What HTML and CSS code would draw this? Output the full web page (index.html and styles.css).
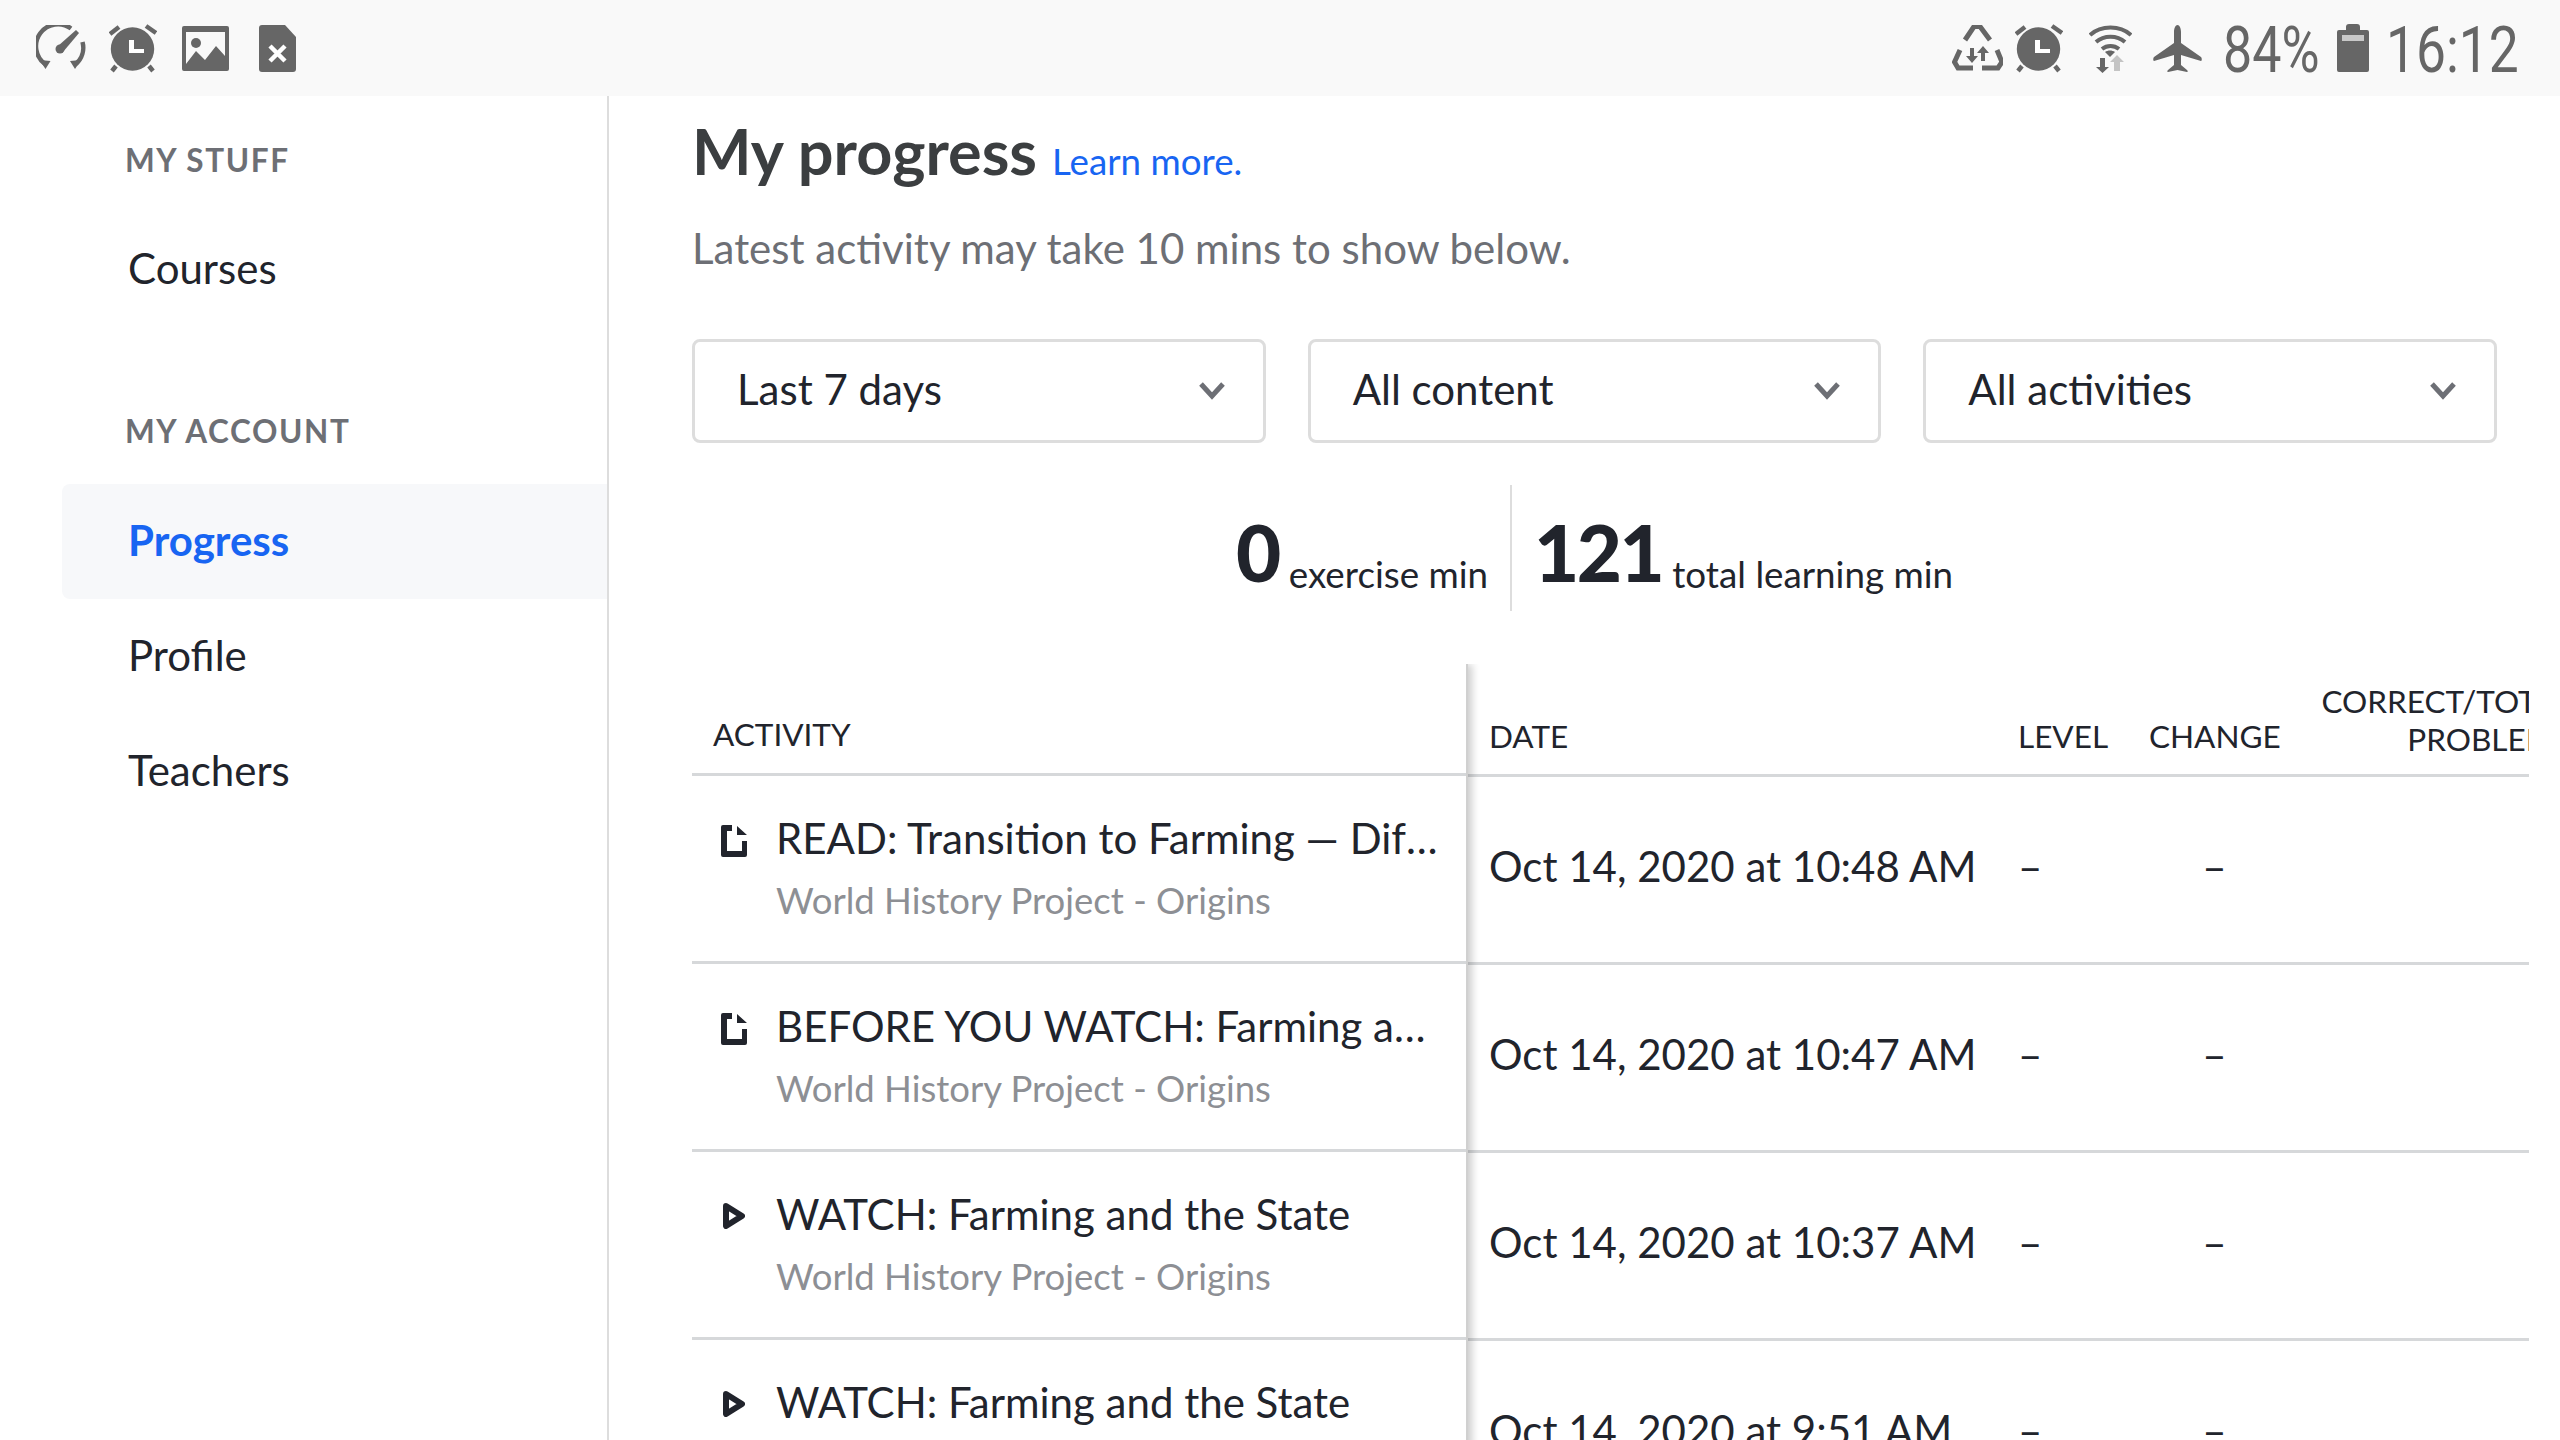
FILE: index.html
```html
<!DOCTYPE html>
<html lang="en">
<head>
<meta charset="utf-8">
<title>My progress</title>
<link rel="stylesheet" href="styles.css">
</head>
<body>
<header class="status">
  <div class="status-left">
    <svg class="i-gauge" width="50" height="46" viewBox="0 0 50 46"><path d="M9 39A22 22 0 0 1 35 3.500" fill="none" stroke="#666" stroke-width="4.500"/><path d="M40 39A22 22 0 0 0 46.500 17" fill="none" stroke="#666" stroke-width="4.500"/><path d="M3.500 35l11 1-5 8zM45 35l-11 1 5 8z" fill="#666"/><circle cx="24" cy="24" r="4.500" fill="#666"/><path d="M22 21L40 5l3 3-16 19z" fill="#666"/></svg>
    <svg class="i-alarm" width="48" height="49" viewBox="0 0 48 49"><use href="#alarm-shape"/></svg>
    <svg class="i-image" width="47" height="45" viewBox="0 0 47 45"><path fill-rule="evenodd" d="M2 0h43a2 2 0 0 1 2 2v41a2 2 0 0 1-2 2H2a2 2 0 0 1-2-2V2a2 2 0 0 1 2-2zM4 6v32l10-13 9 9 11-14 9 10V6z" fill="#666"/><circle cx="14" cy="17" r="5" fill="#666"/></svg>
    <svg class="i-sim" width="37" height="47" viewBox="0 0 37 47"><path d="M3 0h23l11 12v32a3 3 0 0 1-3 3H3a3 3 0 0 1-3-3V3a3 3 0 0 1 3-3z" fill="#666"/><path d="M11 21l15 15M26 21L11 36" stroke="#fff" stroke-width="4.500"/></svg>
  </div>
  <div class="status-right">
    <svg width="51" height="46" viewBox="0 0 51 46"><g fill="none" stroke="#666" stroke-width="5"><path d="M13 15L22 1.500h6L38 15"/><path d="M8 25L2.500 37 6 43h15M45 25l5 12-4 6H30"/></g><path d="M18 23h4v8h4l-6 7-6-7h4zM29 36v-8h-4l6-7 6 7h-4v8z" fill="#666"/></svg>
    <svg class="gap-alarm" width="48" height="49" viewBox="0 0 48 49"><symbol id="alarm-shape" viewBox="0 0 48 49"><path d="M1 10l9-7" fill="none" stroke="#666" stroke-width="4.500"/><path d="M47 9L37 2" fill="none" stroke="#666" stroke-width="4.500"/><path d="M7 42l-4 5M40 42l4 5" fill="none" stroke="#666" stroke-width="4.500"/><circle cx="23.500" cy="25" r="21.700" fill="#666"/><path d="M20 16h5v9h10v4H20z" fill="#fff"/></symbol><use href="#alarm-shape"/></svg>
    <svg class="gap-wifi" width="43" height="49" viewBox="0 0 43 49"><g fill="none" stroke="#666" stroke-width="4"><path d="M1 11C12 1 31 1 42 11"/><path d="M7 18c8-7 21-7 29 0"/><path d="M13 25c5-4 12-4 17 0"/></g><path d="M21 33l-5-5c3-2 7-2 10 0z" fill="#666"/><path d="M11 34h5v9h4l-6.500 6L7 43h4z" fill="#666"/><path d="M25 47V38h-4l7-7 7 7h-4v9z" fill="#c4c4c4"/></svg>
    <svg class="gap-plane" width="49" height="47" viewBox="0 0 49 47"><path d="M24.500 0c2.500 0 3.500 4 3.500 7v11l20 14c1 1 1 4 0 4l-20-6v10l6 5c1 1 1 2 0 2l-9.500-2-9.500 2c-1 0-1-1 0-2l6-5V30L1 36c-1 0-1-3 0-4l20-14V7c0-3 1-7 3.500-7z" fill="#666"/></svg>
    <span class="status-text pct">84%</span>
    <svg class="gap-batt" width="32" height="48" viewBox="0 0 32 48"><path d="M9 3a3 3 0 0 1 3-3h8a3 3 0 0 1 3 3v3h7a2 2 0 0 1 2 2v38a2 2 0 0 1-2 2H2a2 2 0 0 1-2-2V8a2 2 0 0 1 2-2h7z" fill="#666"/><rect x="5" y="11" width="22" height="6" fill="#c8c8c8"/></svg>
    <span class="status-text clock">16:12</span>
  </div>
</header>
<div class="app">
  <nav class="sidebar">
    <h3 class="nav-head first">MY STUFF</h3>
    <a class="nav-item">Courses</a>
    <h3 class="nav-head second">MY ACCOUNT</h3>
    <a class="nav-item active">Progress</a>
    <a class="nav-item">Profile</a>
    <a class="nav-item">Teachers</a>
  </nav>
  <main class="content">
    <div class="title-line"><h1>My progress</h1><a class="learn">Learn more.</a></div>
    <p class="latest">Latest activity may take 10 mins to show below.</p>
    <div class="filters">
      <div class="select"><span>Last 7 days</span><svg width="28" height="20" viewBox="0 0 28 20"><path d="M3 3l11 12L25 3" fill="none" stroke="#6d6f75" stroke-width="5"/></svg></div>
      <div class="select"><span>All content</span><svg width="28" height="20" viewBox="0 0 28 20"><path d="M3 3l11 12L25 3" fill="none" stroke="#6d6f75" stroke-width="5"/></svg></div>
      <div class="select"><span>All activities</span><svg width="28" height="20" viewBox="0 0 28 20"><path d="M3 3l11 12L25 3" fill="none" stroke="#6d6f75" stroke-width="5"/></svg></div>
    </div>
    <div class="stats">
      <div class="stat left"><b>0</b><span>exercise min</span></div>
      <div class="stat right"><b>121</b><span>total learning min</span></div>
    </div>
    <div class="table">
      <div class="frozen">
        <div class="th-activity">ACTIVITY</div>
        <div class="act-row"><svg class="doc" width="26" height="32" viewBox="0 0 26 32"><path d="M2 0h9v6H6v20h15V16h5v14a2 2 0 0 1-2 2H2a2 2 0 0 1-2-2V2a2 2 0 0 1 2-2zM16 1l10 9H16z" fill="#21242c"/></svg><div class="act-text"><div class="act-title">READ: Transition to Farming — Dif&zwnj;ficulty Level</div><div class="act-sub">World History Project - Origins</div></div></div>
        <div class="act-row"><svg class="doc" width="26" height="32" viewBox="0 0 26 32"><path d="M2 0h9v6H6v20h15V16h5v14a2 2 0 0 1-2 2H2a2 2 0 0 1-2-2V2a2 2 0 0 1 2-2zM16 1l10 9H16z" fill="#21242c"/></svg><div class="act-text"><div class="act-title">BEFORE YOU WATCH: Farming and the State</div><div class="act-sub">World History Project - Origins</div></div></div>
        <div class="act-row"><svg class="play" width="22" height="26" viewBox="0 0 22 26"><path d="M3 3l16 10L3 23z" fill="none" stroke="#21242c" stroke-width="6" stroke-linejoin="round"/></svg><div class="act-text"><div class="act-title">WATCH: Farming and the State</div><div class="act-sub">World History Project - Origins</div></div></div>
        <div class="act-row"><svg class="play" width="22" height="26" viewBox="0 0 22 26"><path d="M3 3l16 10L3 23z" fill="none" stroke="#21242c" stroke-width="6" stroke-linejoin="round"/></svg><div class="act-text"><div class="act-title">WATCH: Farming and the State</div><div class="act-sub">World History Project - Origins</div></div></div>
      </div>
      <div class="scroll">
        <div class="grid-row head"><div class="date-h">DATE</div><div>LEVEL</div><div class="change">CHANGE</div><div class="correct">CORRECT/TOTAL PROBLEMS</div></div>
        <div class="grid-row body"><div class="date">Oct 14, 2020 at 10:48 AM</div><div>–</div><div class="change">–</div><div></div></div>
        <div class="grid-row body"><div class="date">Oct 14, 2020 at 10:47 AM</div><div>–</div><div class="change">–</div><div></div></div>
        <div class="grid-row body"><div class="date">Oct 14, 2020 at 10:37 AM</div><div>–</div><div class="change">–</div><div></div></div>
        <div class="grid-row body"><div class="date">Oct 14, 2020 at 9:51 AM</div><div>–</div><div class="change">–</div><div></div></div>
      </div>
    </div>
  </main>
</div>
</body>
</html>
```

FILE: styles.css
```css
* { box-sizing: border-box; }
html, body { margin: 0; padding: 0; width: 2560px; height: 1440px; overflow: hidden; background: #fff; }
body { font-family: Lato, "Open Sans", sans-serif; color: #21242c; display: flex; flex-direction: column; }
svg { display: block; flex: none; }

.status { height: 96px; flex: none; background: #f9f9f9; display: flex; justify-content: space-between; align-items: center; padding: 0 43px 0 36px; }
.status-left, .status-right { display: flex; align-items: center; }
.i-alarm { margin-left: 23px; }
.i-image { margin-left: 25px; }
.i-sim { margin-left: 30px; }
.status-text { font-family: Roboto, sans-serif; font-weight: 400; color: #666; font-size: 65px; line-height: 64px; display: block; transform-origin: left center; position: relative; top: 2px; white-space: nowrap; }
.pct { width: 96px; margin-left: 21px; transform: scaleX(.8); }
.clock { width: 131px; margin-left: 17px; transform: scaleX(.82); }
.gap-alarm { margin-left: 12px; }
.gap-wifi { margin-left: 26px; }
.gap-plane { margin-left: 21px; }
.gap-batt { margin-left: 18px; }

.app { flex: 1; display: flex; min-height: 0; }
.sidebar { width: 609px; flex: none; border-right: 2px solid #ddd; padding-left: 62px; }
.nav-head { margin: 0; padding-left: 63px; font-size: 31.500px; line-height: 40px; font-weight: 700; letter-spacing: 1.600px; color: #6d6f75; }
.nav-head.first { margin-top: 44px; margin-bottom: 32px; }
.nav-head.second { margin-top: 84px; margin-bottom: 33px; }
.nav-item { display: flex; align-items: center; height: 115px; padding: 0 0 4px 66px; font-size: 42px; color: #21242c; }
.nav-item.active { color: #1865f2; font-weight: 700; background: #f7f8fa; border-radius: 8px 0 0 8px; }

.content { flex: 1; min-width: 0; padding-left: 83px; overflow: hidden; }
.title-line { display: flex; align-items: baseline; gap: 15px; margin-top: 10px; height: 90px; }
h1 { margin: 0; font-size: 63px; line-height: 90px; font-weight: 700; color: #3b3e40; }
.learn { font-size: 36.750px; color: #1865f2; }
.latest { margin: 0; margin-top: 22px; font-size: 42px; line-height: 60px; color: #6d6f75; }
.filters { display: flex; gap: 42px; margin-top: 61px; width: 1805px; }
.select { flex: 1; height: 104px; border: 3px solid #ddd; border-radius: 8px; display: flex; align-items: center; justify-content: space-between; padding: 0 37px 0 42px; font-size: 42px; }
.select span { padding-bottom: 5px; }
.stats { display: flex; justify-content: center; width: 1805px; margin-top: 42px; height: 126px; }
.stat { display: block; white-space: nowrap; padding-top: 22px; }
.stat b { font-size: 78px; font-weight: 900; line-height: 90px; letter-spacing: -2.500px; vertical-align: 6px; margin-right: 10px; }
.stat span { font-size: 36.750px; }
.stat.left { padding-right: 22px; border-right: 2px solid #ddd; }
.stat.right { padding-left: 22px; }

.table { display: flex; margin-top: 53px; width: 1837px; }
.frozen { width: 776px; flex: none; border-right: 2px solid #d0d0d0; box-shadow: 4px 0 8px rgba(0,0,0,.2); clip-path: inset(0 -20px 0 0); position: relative; z-index: 1; background: #fff; }
.th-activity { height: 112px; border-bottom: 3px solid #d6d8da; padding: 50px 0 0 21px; font-size: 31.500px; line-height: 40px; }
.act-row { height: 188px; border-bottom: 3px solid #d6d8da; display: flex; padding-top: 32px; }
.doc { margin: 17px 29px 0 29px; }
.play { margin: 19px 31px 0 31px; }
.act-text { min-width: 0; width: 662px; }
.act-title { font-size: 42px; line-height: 60px; white-space: nowrap; overflow: hidden; text-overflow: ellipsis; }
.act-sub { font-size: 36.500px; line-height: 50px; margin-top: 7px; color: #8d8f94; }

.scroll { flex: 1; min-width: 0; overflow: hidden; }
.grid-row { display: grid; grid-template-columns: 550px 131px 131px 292px; width: 1104px; border-bottom: 3px solid #d6d8da; }
.grid-row.head { height: 113px; align-items: end; font-size: 31.500px; line-height: 38px; padding-bottom: 19px; }
.grid-row.body { height: 188px; align-items: center; font-size: 42px; padding-bottom: 8px; }
.date, .date-h { padding-left: 21px; }
.change { text-align: center; }
.correct { text-align: right; margin-bottom: -3px; }
```
